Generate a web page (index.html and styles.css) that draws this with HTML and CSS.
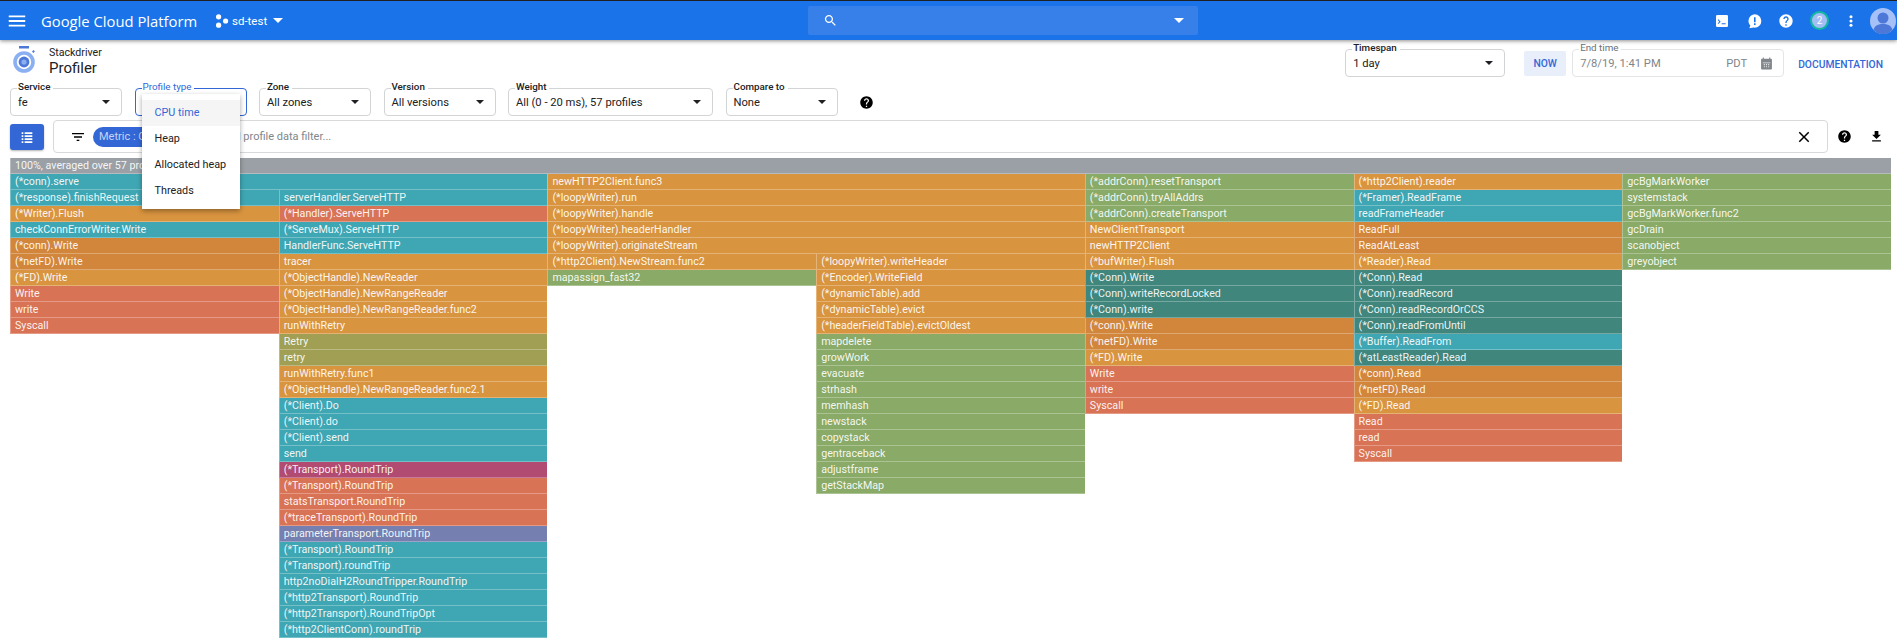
FILE: index.html
```html
<!DOCTYPE html>
<html lang="en">
<head>
    <meta charset="UTF-8">
    <title>Profiler - Google Cloud Platform</title>
    <link rel="stylesheet" href="styles.css">
</head>
<body>
    <header class="topbar">
        <svg class="icon menu-icon" viewBox="0 0 24 24"><path d="M3 18h18v-2H3v2zm0-5h18v-2H3v2zm0-7v2h18V6H3z"/></svg>
        <span class="brand">Google Cloud Platform</span>
        <div class="project">
            <svg class="pods" viewBox="0 0 14 14"><circle cx="3.6" cy="2.8" r="2.6"/><circle cx="10.6" cy="7" r="2.6"/><circle cx="3.6" cy="11.2" r="2.6"/></svg>
            <span>sd-test</span>
            <i class="caret caret-white"></i>
        </div>
        <div class="search">
            <svg class="icon search-icon" viewBox="0 0 24 24"><path d="M15.5 14h-.79l-.28-.27C15.41 12.59 16 11.11 16 9.5 16 5.91 13.09 3 9.5 3S3 5.91 3 9.5 5.91 16 9.5 16c1.61 0 3.09-.59 4.23-1.57l.27.28v.79l5 4.99L20.49 19l-4.99-5zm-6 0C7.01 14 5 11.99 5 9.5S7.01 5 9.5 5 14 7.01 14 9.5 11.99 14 9.5 14z"/></svg>
            <i class="caret caret-white"></i>
        </div>
        <div class="top-actions">
            <svg class="icon act" viewBox="0 0 24 24"><rect x="3" y="3" width="18" height="18" rx="2"/><path class="ink" d="M6.5 9.5 10 13l-3.5 3.5-1-1L8 13l-2.500-2.500zM11.500 15.500h6v1.500h-6z"/></svg>
            <svg class="icon act" viewBox="0 0 24 24"><path d="M13 2a10 10 0 0 1 0 20c-.5 0-1 0-1.500-.1L5 23l1.500-4.200A10 10 0 0 1 13 2z"/><path class="ink" d="M12 6.500h2.400v7.500H12zM12 15.500h2.400v2.400H12z"/></svg>
            <svg class="icon act" viewBox="0 0 24 24"><path d="M12 2C6.480 2 2 6.480 2 12s4.480 10 10 10 10-4.480 10-10S17.520 2 12 2zm1 17h-2v-2h2v2zm2.070-7.750l-.9.920C13.450 12.900 13 13.500 13 15h-2v-.5c0-1.100.450-2.100 1.170-2.830l1.240-1.260c.370-.360.590-.860.590-1.410 0-1.100-.9-2-2-2s-2 .9-2 2H8c0-2.210 1.790-4 4-4s4 1.790 4 4c0 .880-.360 1.680-.930 2.250z"/></svg>
            <span class="badge">2</span>
            <svg class="icon act" viewBox="0 0 24 24"><circle cx="12" cy="5.500" r="2.300"/><circle cx="12" cy="12" r="2.300"/><circle cx="12" cy="18.500" r="2.300"/></svg>
            <svg class="avatar" viewBox="0 0 26 26"><circle cx="13" cy="13" r="13" fill="#a6c1f7"/><circle cx="13" cy="10" r="5.500" fill="#4d78d8"/><path d="M3.500 22c1-4.500 5-6 9.500-6s8.500 1.500 9.500 6a13 13 0 0 1-19 0z" fill="#4d78d8"/></svg>
        </div>
    </header>

    <main class="page">
        <div class="title-row">
            <div class="title">
                <svg class="logo" viewBox="0 0 22 27"><rect x="6" y="0" width="10" height="2.500" fill="#4d78d8"/><path d="M19 5.500l1.600-1.400 1.300 1.400-1.600 1.500z" fill="#4d78d8"/><circle cx="11" cy="16" r="9" fill="none" stroke="#8ab0f2" stroke-width="3.600"/><circle cx="11" cy="16" r="5.400" fill="#4d78d8"/><circle cx="11" cy="16" r="2.600" fill="#8ab0f2"/></svg>
                <div>
                    <div class="product">Stackdriver</div>
                    <h1>Profiler</h1>
                </div>
            </div>
            <div class="time-controls">
                <div class="field timespan">
                    <label>Timespan</label>
                    <span>1 day</span>
                    <i class="caret"></i>
                </div>
                <button class="now">NOW</button>
                <div class="field endtime">
                    <label>End time</label>
                    <span>7/8/19, 1:41 PM</span>
                    <span class="tz">PDT</span>
                    <svg class="icon cal" viewBox="0 0 24 24"><path d="M20 3h-1V1h-2v2H7V1H5v2H4c-1.100 0-2 .9-2 2v16c0 1.100.9 2 2 2h16c1.100 0 2-.9 2-2V5c0-1.100-.9-2-2-2z"/><path class="grid" d="M5 10h14v1.500H5zM7 13h2v2H7zM11 13h2v2h-2zM15 13h2v2h-2zM7 17h2v2H7zM11 17h2v2h-2zM15 17h2v2h-2z"/></svg>
                </div>
                <a class="docs">DOCUMENTATION</a>
            </div>
        </div>

        <div class="field-row">
            <div class="field small">
                <label>Service</label>
                <span>fe</span>
                <i class="caret"></i>
            </div>
            <div class="field small active">
                <label>Profile type</label>
                <div class="menu">
                    <div class="menu-item selected">CPU time</div>
                    <div class="menu-item">Heap</div>
                    <div class="menu-item">Allocated heap</div>
                    <div class="menu-item">Threads</div>
                </div>
            </div>
            <div class="field small">
                <label>Zone</label>
                <span>All zones</span>
                <i class="caret"></i>
            </div>
            <div class="field small">
                <label>Version</label>
                <span>All versions</span>
                <i class="caret"></i>
            </div>
            <div class="field wide">
                <label>Weight</label>
                <span>All (0 - 20 ms), 57 profiles</span>
                <i class="caret"></i>
            </div>
            <div class="field small">
                <label>Compare to</label>
                <span>None</span>
                <i class="caret"></i>
            </div>
            <svg class="icon dark help-main" viewBox="0 0 24 24"><path d="M12 2C6.480 2 2 6.480 2 12s4.480 10 10 10 10-4.480 10-10S17.520 2 12 2zm1 17h-2v-2h2v2zm2.070-7.750l-.9.920C13.450 12.900 13 13.500 13 15h-2v-.5c0-1.100.450-2.100 1.170-2.830l1.240-1.260c.370-.360.590-.860.590-1.410 0-1.100-.9-2-2-2s-2 .9-2 2H8c0-2.210 1.790-4 4-4s4 1.790 4 4c0 .880-.360 1.680-.930 2.250z"/></svg>
        </div>

        <div class="filter-row">
            <button class="list-toggle">
                <svg class="icon" viewBox="0 0 24 24"><path d="M4 5h2.500v2.500H4zM8.500 5H20v2.500H8.500zM4 9.500h2.500V12H4zM8.500 9.500H20V12H8.500zM4 14h2.500v2.500H4zM8.500 14H20v2.500H8.500zM4 18.500h2.500V21H4zM8.500 18.500H20V21H8.500z"/></svg>
            </button>
            <div class="filter-box">
                <svg class="icon dark filter-icon" viewBox="0 0 24 24"><path d="M10 18h4v-2h-4v2zM3 6v2h18V6H3zm3 7h12v-2H6v2z"/></svg>
                <span class="chip">Metric : CPU time</span>
                <span class="placeholder">Add profile data filter...</span>
                <svg class="icon dark clear-icon" viewBox="0 0 24 24"><path d="M19 6.410L17.590 5 12 10.590 6.410 5 5 6.410 10.590 12 5 17.590 6.410 19 12 13.410 17.590 19 19 17.590 13.410 12z"/></svg>
            </div>
            <svg class="icon dark filter-act" viewBox="0 0 24 24"><path d="M12 2C6.480 2 2 6.480 2 12s4.480 10 10 10 10-4.480 10-10S17.520 2 12 2zm1 17h-2v-2h2v2zm2.070-7.750l-.9.920C13.450 12.900 13 13.500 13 15h-2v-.5c0-1.100.450-2.100 1.170-2.830l1.240-1.260c.370-.360.590-.860.590-1.410 0-1.100-.9-2-2-2s-2 .9-2 2H8c0-2.210 1.790-4 4-4s4 1.790 4 4c0 .880-.360 1.680-.930 2.250z"/></svg>
            <svg class="icon dark filter-act" viewBox="0 0 24 24"><path d="M19 9h-4V3H9v6H5l7 7 7-7zM5 18v2h14v-2H5z"/></svg>
        </div>

        <div class="flame">
            <div class="frame gray">100%, averaged over 57 profiles</div>
            <div class="flame-row">
                <div class="stack w2">
                    <div class="frame teal">(*conn).serve</div>
                    <div class="flame-row">
                        <div class="stack w1">
                            <div class="frame teal">(*response).finishRequest</div>
                            <div class="frame orange">(*Writer).Flush</div>
                            <div class="frame teal">checkConnErrorWriter.Write</div>
                            <div class="frame ochre">(*conn).Write</div>
                            <div class="frame ochre">(*netFD).Write</div>
                            <div class="frame orange">(*FD).Write</div>
                            <div class="frame red">Write</div>
                            <div class="frame red">write</div>
                            <div class="frame red">Syscall</div>
                        </div>
                        <div class="stack w1">
                            <div class="frame teal">serverHandler.ServeHTTP</div>
                            <div class="frame red">(*Handler).ServeHTTP</div>
                            <div class="frame teal">(*ServeMux).ServeHTTP</div>
                            <div class="frame teal">HandlerFunc.ServeHTTP</div>
                            <div class="frame orange">tracer</div>
                            <div class="frame orange">(*ObjectHandle).NewReader</div>
                            <div class="frame orange">(*ObjectHandle).NewRangeReader</div>
                            <div class="frame orange">(*ObjectHandle).NewRangeReader.func2</div>
                            <div class="frame orange">runWithRetry</div>
                            <div class="frame olive">Retry</div>
                            <div class="frame olive">retry</div>
                            <div class="frame orange">runWithRetry.func1</div>
                            <div class="frame orange">(*ObjectHandle).NewRangeReader.func2.1</div>
                            <div class="frame teal">(*Client).Do</div>
                            <div class="frame teal">(*Client).do</div>
                            <div class="frame teal">(*Client).send</div>
                            <div class="frame teal">send</div>
                            <div class="frame plum">(*Transport).RoundTrip</div>
                            <div class="frame red">(*Transport).RoundTrip</div>
                            <div class="frame red">statsTransport.RoundTrip</div>
                            <div class="frame red">(*traceTransport).RoundTrip</div>
                            <div class="frame slate">parameterTransport.RoundTrip</div>
                            <div class="frame teal">(*Transport).RoundTrip</div>
                            <div class="frame teal">(*Transport).roundTrip</div>
                            <div class="frame teal">http2noDialH2RoundTripper.RoundTrip</div>
                            <div class="frame teal">(*http2Transport).RoundTrip</div>
                            <div class="frame teal">(*http2Transport).RoundTripOpt</div>
                            <div class="frame teal">(*http2ClientConn).roundTrip</div>
                        </div>
                    </div>
                </div>
                <div class="stack w2">
                    <div class="frame orange">newHTTP2Client.func3</div>
                    <div class="frame orange">(*loopyWriter).run</div>
                    <div class="frame orange">(*loopyWriter).handle</div>
                    <div class="frame orange">(*loopyWriter).headerHandler</div>
                    <div class="frame orange">(*loopyWriter).originateStream</div>
                    <div class="flame-row">
                        <div class="stack w1">
                            <div class="frame orange">(*http2Client).NewStream.func2</div>
                            <div class="frame green">mapassign_fast32</div>
                        </div>
                        <div class="stack w1">
                            <div class="frame orange">(*loopyWriter).writeHeader</div>
                            <div class="frame orange">(*Encoder).WriteField</div>
                            <div class="frame orange">(*dynamicTable).add</div>
                            <div class="frame orange">(*dynamicTable).evict</div>
                            <div class="frame orange">(*headerFieldTable).evictOldest</div>
                            <div class="frame green">mapdelete</div>
                            <div class="frame green">growWork</div>
                            <div class="frame green">evacuate</div>
                            <div class="frame green">strhash</div>
                            <div class="frame green">memhash</div>
                            <div class="frame green">newstack</div>
                            <div class="frame green">copystack</div>
                            <div class="frame green">gentraceback</div>
                            <div class="frame green">adjustframe</div>
                            <div class="frame green">getStackMap</div>
                        </div>
                    </div>
                </div>
                <div class="stack w1">
                    <div class="frame green">(*addrConn).resetTransport</div>
                    <div class="frame green">(*addrConn).tryAllAddrs</div>
                    <div class="frame green">(*addrConn).createTransport</div>
                    <div class="frame orange">NewClientTransport</div>
                    <div class="frame orange">newHTTP2Client</div>
                    <div class="frame orange">(*bufWriter).Flush</div>
                    <div class="frame pine">(*Conn).Write</div>
                    <div class="frame pine">(*Conn).writeRecordLocked</div>
                    <div class="frame pine">(*Conn).write</div>
                    <div class="frame ochre">(*conn).Write</div>
                    <div class="frame ochre">(*netFD).Write</div>
                    <div class="frame orange">(*FD).Write</div>
                    <div class="frame red">Write</div>
                    <div class="frame red">write</div>
                    <div class="frame red">Syscall</div>
                </div>
                <div class="stack w1">
                    <div class="frame orange">(*http2Client).reader</div>
                    <div class="frame teal">(*Framer).ReadFrame</div>
                    <div class="frame teal">readFrameHeader</div>
                    <div class="frame ochre">ReadFull</div>
                    <div class="frame ochre">ReadAtLeast</div>
                    <div class="frame orange">(*Reader).Read</div>
                    <div class="frame pine">(*Conn).Read</div>
                    <div class="frame pine">(*Conn).readRecord</div>
                    <div class="frame pine">(*Conn).readRecordOrCCS</div>
                    <div class="frame pine">(*Conn).readFromUntil</div>
                    <div class="frame teal">(*Buffer).ReadFrom</div>
                    <div class="frame pine">(*atLeastReader).Read</div>
                    <div class="frame ochre">(*conn).Read</div>
                    <div class="frame ochre">(*netFD).Read</div>
                    <div class="frame orange">(*FD).Read</div>
                    <div class="frame red">Read</div>
                    <div class="frame red">read</div>
                    <div class="frame red">Syscall</div>
                </div>
                <div class="stack w1">
                    <div class="frame green">gcBgMarkWorker</div>
                    <div class="frame green">systemstack</div>
                    <div class="frame green">gcBgMarkWorker.func2</div>
                    <div class="frame green">gcDrain</div>
                    <div class="frame green">scanobject</div>
                    <div class="frame green">greyobject</div>
                </div>
            </div>
        </div>
    </main>
</body>
</html>
```

FILE: styles.css
```css
html, body {
    height: 100%;
}
body {
    margin: 0;
    overflow: hidden;
    font-family: Roboto, sans-serif;
    font-size: 11px;
    color: #202124;
    background: #fff;
}
.icon {
    display: block;
    width: 16px;
    height: 16px;
    fill: #fff;
}
.icon.dark {
    fill: #000;
}
.icon .ink {
    fill: #1a73e8;
}
.caret {
    display: block;
    width: 0;
    height: 0;
    border-left: 4px solid transparent;
    border-right: 4px solid transparent;
    border-top: 4px solid #202124;
}
.caret-white {
    border-top-color: #fff;
    border-left-width: 5px;
    border-right-width: 5px;
    border-top-width: 5px;
}

/* top blue bar */
.topbar {
    display: flex;
    align-items: center;
    height: 39px;
    border-top: 1px solid #202124;
    background: #1a73e8;
    color: #fff;
    box-shadow: 0 1px 4px rgba(0, 0, 0, .45);
    position: relative;
    z-index: 2;
}
.menu-icon {
    width: 22px;
    height: 22px;
    margin-left: 6px;
}
.brand {
    margin-left: 13px;
    width: 174px;
    font-family: "Open Sans", sans-serif;
    font-size: 14.8px;
    white-space: nowrap;
}
.project {
    display: flex;
    align-items: center;
    font-size: 11.5px;
    width: 593px;
}
.pods {
    width: 14px;
    height: 14px;
    fill: #fff;
    margin-right: 3px;
}
.project .caret {
    margin-left: 6px;
}
.search {
    display: flex;
    align-items: center;
    justify-content: space-between;
    width: 390px;
    height: 29px;
    padding: 0 14px 0 15px;
    box-sizing: border-box;
    background: #3780ea;
    border-radius: 2px;
}
.search-icon {
    width: 15px;
    height: 15px;
}
.top-actions {
    margin-left: auto;
    display: flex;
    align-items: center;
    padding-right: 1px;
}
.act {
    margin-left: 16px;
}
.badge {
    width: 15px;
    height: 15px;
    line-height: 15px;
    margin-left: 16px;
    margin-right: -2px;
    text-align: center;
    font-size: 10px;
    color: #fff;
    background: #a3bdf5;
    border: 2px solid #14b8a0;
    border-radius: 50%;
}
.avatar {
    width: 26px;
    height: 26px;
    margin-left: 11px;
}

.page {
    padding: 0 6px 0 10px;
}

/* title and time controls */
.title-row {
    display: flex;
    justify-content: space-between;
    height: 48px;
}
.title {
    display: flex;
    padding: 6px 0 0 3px;
}
.logo {
    width: 22px;
    height: 27px;
    margin-right: 14px;
}
.product {
    font-size: 10.6px;
    line-height: 13px;
}
h1 {
    margin: 0;
    font-size: 15px;
    font-weight: 400;
    line-height: 18px;
}
.time-controls {
    display: flex;
    align-items: flex-start;
    padding-top: 9px;
}
.field {
    position: relative;
    display: flex;
    align-items: center;
    justify-content: space-between;
    box-sizing: border-box;
    height: 28px;
    padding: 0 11px 0 7px;
    font-size: 11.2px;
    border: 1px solid #d2d4d6;
    border-radius: 4px;
}
.field label {
    position: absolute;
    top: -8px;
    left: 6px;
    padding: 0 3px 0 1px;
    background: #fff;
    font-size: 9.8px;
    font-weight: 500;
    line-height: 12px;
}
.timespan {
    width: 160px;
}
.now {
    width: 42px;
    height: 25px;
    margin: 2px 6px 0 19px;
    padding: 0;
    border: 0;
    border-radius: 2px;
    background: #e8eefa;
    color: #3367d6;
    font-family: Roboto, sans-serif;
    font-size: 10.3px;
    font-weight: 500;
}
.endtime {
    width: 212px;
    color: #80868b;
    border-color: #e4e5e7;
    padding-right: 10px;
}
.endtime label {
    color: #6b7074;
    font-weight: 400;
}
.tz {
    margin-left: auto;
    margin-right: 13px;
}
.cal {
    width: 13px;
    height: 13px;
    fill: #80868b;
}
.cal .grid {
    fill: #e8e8e8;
}
.docs {
    margin: 9px 8px 0 14px;
    color: #3367d6;
    font-size: 10.3px;
    font-weight: 500;
}

/* select row */
.field-row {
    display: flex;
    align-items: center;
    gap: 12.5px;
}
.small {
    width: 112px;
}
.wide {
    width: 205px;
}
.active {
    border-color: #3367d6;
}
.active label {
    color: #3367d6;
    font-weight: 400;
}
.help-main {
    width: 15px;
    height: 15px;
    margin-left: 9px;
}
.menu {
    position: absolute;
    top: 5px;
    left: 6px;
    width: 98px;
    padding-top: 6px;
    box-sizing: border-box;
    height: 115px;
    background: #fff;
    box-shadow: 0 2px 5px rgba(0, 0, 0, .35);
    z-index: 3;
}
.menu-item {
    height: 26px;
    line-height: 25px;
    padding-left: 13px;
    color: #202124;
    font-size: 10.8px;
}
.menu-item.selected {
    line-height: 26px;
    background: #f5f5f5;
    color: #3367d6;
}

/* filter row */
.filter-row {
    display: flex;
    align-items: center;
    margin-top: 4px;
}
.list-toggle {
    width: 34px;
    height: 26px;
    margin-right: 9px;
    padding: 0;
    display: flex;
    align-items: center;
    justify-content: center;
    border: 0;
    border-radius: 3px;
    background: #3367d6;
    box-shadow: 0 1px 2px rgba(0, 0, 0, .3);
}
.filter-box {
    display: flex;
    align-items: center;
    width: 1775px;
    height: 33px;
    box-sizing: border-box;
    padding: 0 14px 0 16px;
    border: 1px solid #d8d9db;
    border-radius: 4px;
}
.filter-icon {
    margin-right: 7px;
}
.chip {
    padding: 0 7px 0 6px;
    height: 20px;
    line-height: 20px;
    border-radius: 10px;
    background: #3367d6;
    color: #c5d4f5;
}
.placeholder {
    margin-left: 30px;
    color: #80868b;
}
.clear-icon {
    margin-left: auto;
    width: 18px;
    height: 18px;
}
.filter-act {
    width: 15px;
    height: 15px;
    margin-left: 9px;
}
.filter-act + .filter-act {
    margin-left: 17px;
}

/* flame graph */
.flame {
    margin-top: 5px;
    color: rgba(255, 255, 255, .92);
}
.flame-row {
    display: flex;
    align-items: flex-start;
}
.stack {
    min-width: 0;
}
.w1 {
    flex: 1 1 0;
}
.w2 {
    flex: 2 1 0;
}
.frame {
    height: 16px;
    box-sizing: border-box;
    padding-left: 4px;
    line-height: 16px;
    font-size: 10.7px;
    white-space: nowrap;
    overflow: hidden;
    border-bottom: 1px solid rgba(255, 255, 255, .28);
    border-left: 1px solid rgba(255, 255, 255, .3);
}
.gray { background-color: #9aa0a6; }
.teal { background-color: #3fa6b4; }
.orange { background-color: #d9943f; }
.ochre { background-color: #d1863c; }
.red { background-color: #d97355; }
.green { background-color: #8aaa67; }
.olive { background-color: #a09f53; }
.pine { background-color: #40867d; }
.plum { background-color: #b14b72; }
.slate { background-color: #757fb0; }
```
